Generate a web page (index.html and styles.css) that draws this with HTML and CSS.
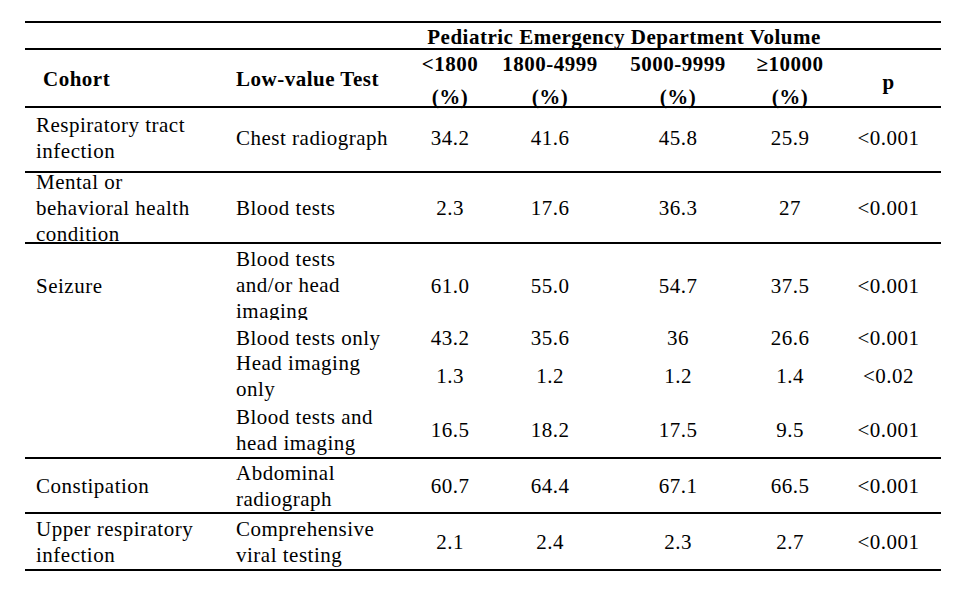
FILE: index.html
```html
<!DOCTYPE html>
<html>
<head>
<meta charset="utf-8">
<link rel="stylesheet" href="styles.css">
</head>
<body>
<div class="tbl">
  <div class="row head1">
    <div class="vol">Pediatric Emergency Department Volume</div>
  </div>
  <div class="row head2">
    <div class="cell c1 cohort">Cohort</div>
    <div class="cell c2 lvt">Low-value Test</div>
    <div class="cell num hd">&lt;1800<br>(%)</div>
    <div class="cell num hd">1800-4999<br>(%)</div>
    <div class="cell num hd">5000-9999<br>(%)</div>
    <div class="cell num hd">&ge;10000<br>(%)</div>
    <div class="cell num pcol">p</div>
  </div>
  <div class="row r-resp">
    <div class="cell c1">Respiratory tract<br>infection</div>
    <div class="cell c2">Chest radiograph</div>
    <div class="cell num">34.2</div>
    <div class="cell num">41.6</div>
    <div class="cell num">45.8</div>
    <div class="cell num">25.9</div>
    <div class="cell num">&lt;0.001</div>
  </div>
  <div class="row r-mental">
    <div class="cell c1">Mental or<br>behavioral health<br>condition</div>
    <div class="cell c2">Blood tests</div>
    <div class="cell num">2.3</div>
    <div class="cell num">17.6</div>
    <div class="cell num">36.3</div>
    <div class="cell num">27</div>
    <div class="cell num">&lt;0.001</div>
  </div>
  <div class="row r-seizure">
    <div class="cell c1">Seizure</div>
    <div class="cell c2 clip">Blood tests<br>and/or head<br>imaging</div>
    <div class="cell num">61.0</div>
    <div class="cell num">55.0</div>
    <div class="cell num">54.7</div>
    <div class="cell num">37.5</div>
    <div class="cell num">&lt;0.001</div>

    <div class="cell c1"></div>
    <div class="cell c2">Blood tests only</div>
    <div class="cell num">43.2</div>
    <div class="cell num">35.6</div>
    <div class="cell num">36</div>
    <div class="cell num">26.6</div>
    <div class="cell num">&lt;0.001</div>

    <div class="cell c1"></div>
    <div class="cell c2">Head imaging<br>only</div>
    <div class="cell num">1.3</div>
    <div class="cell num">1.2</div>
    <div class="cell num">1.2</div>
    <div class="cell num">1.4</div>
    <div class="cell num">&lt;0.02</div>

    <div class="cell c1"></div>
    <div class="cell c2">Blood tests and<br>head imaging</div>
    <div class="cell num">16.5</div>
    <div class="cell num">18.2</div>
    <div class="cell num">17.5</div>
    <div class="cell num">9.5</div>
    <div class="cell num">&lt;0.001</div>
  </div>
  <div class="row r-const">
    <div class="cell c1">Constipation</div>
    <div class="cell c2">Abdominal<br>radiograph</div>
    <div class="cell num">60.7</div>
    <div class="cell num">64.4</div>
    <div class="cell num">67.1</div>
    <div class="cell num">66.5</div>
    <div class="cell num">&lt;0.001</div>
  </div>
  <div class="row r-upper">
    <div class="cell c1">Upper respiratory<br>infection</div>
    <div class="cell c2">Comprehensive<br>viral testing</div>
    <div class="cell num">2.1</div>
    <div class="cell num">2.4</div>
    <div class="cell num">2.3</div>
    <div class="cell num">2.7</div>
    <div class="cell num">&lt;0.001</div>
  </div>
</div>
</body>
</html>
```
FILE: styles.css
```css
html, body {
  margin: 0;
  padding: 0;
  background: #fff;
}
body {
  font-family: "Liberation Serif", "Times New Roman", serif;
  font-size: 21px;
  letter-spacing: 0.5px;
  line-height: 26px;
  color: #000;
}
.tbl {
  width: 916px;
  margin: 21px 0 0 25px;
  border-top: 2px solid #000;
}
.row {
  display: grid;
  grid-template-columns: 203px 184px 76px 124px 132px 92px 105px;
  border-bottom: 2px solid #000;
}
.cell {
  display: flex;
  align-items: center;
  white-space: nowrap;
}
.c1 {
  padding-left: 11px;
}
.c2 {
  padding-left: 8px;
}
.num {
  justify-content: center;
  text-align: center;
}
.head1 {
  height: 25px;
  grid-template-rows: 25px;
}
.vol {
  grid-column: 3 / 7;
  text-align: center;
  font-weight: bold;
  line-height: 27px;
  padding-top: 1px;
}
.head2 {
  height: 56px;
  grid-template-rows: 56px;
  font-weight: bold;
}
.cohort {
  padding-left: 18px;
  padding-top: 2px;
}
.lvt {
  padding-top: 2px;
}
.hd {
  line-height: 33px;
  padding-top: 5px;
}
.pcol {
  padding-top: 7px;
}
.r-resp {
  height: 63px;
  grid-template-rows: 63px;
}
.r-resp .cell {
  padding-bottom: 4px;
}
.r-mental {
  height: 69px;
  grid-template-rows: 69px;
}
.r-seizure {
  height: 213px;
  grid-template-rows: 83px 22px 54px 54px;
}
.clip {
  align-self: start;
  align-items: flex-start;
  height: 74px;
  padding-top: 2px;
  overflow: hidden;
}
.r-const {
  height: 53px;
  grid-template-rows: 53px;
}
.r-upper {
  height: 55px;
  grid-template-rows: 55px;
}
```
